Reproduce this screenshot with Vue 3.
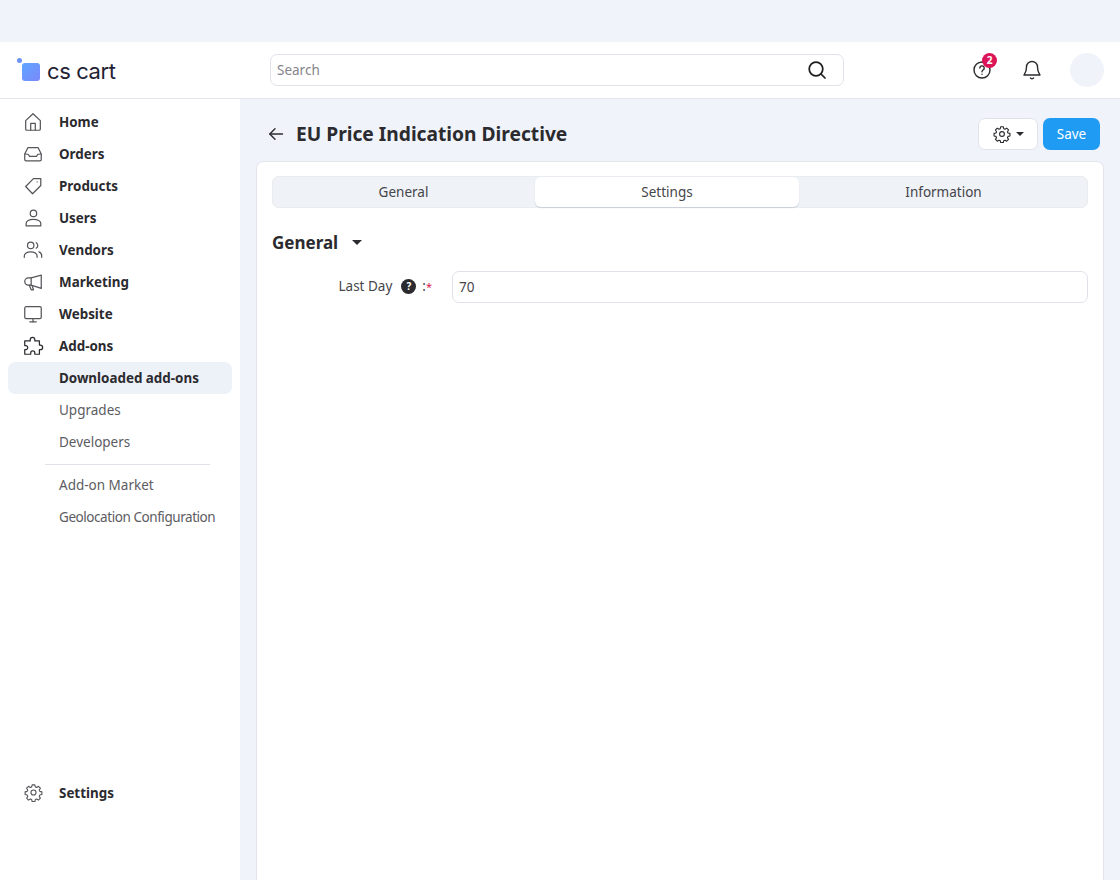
<script setup>
const nav = [
  { label: 'Home', paths: ['M4 10.500 12 3l8 7.500V19.500a1.500 1.500 0 0 1-1.500 1.500h-13A1.500 1.500 0 0 1 4 19.500z', 'M9.500 21v-7.500h5V21'] },
  { label: 'Orders', paths: ['M6.500 5h11L21 12v6a1.500 1.500 0 0 1-1.500 1.500h-15A1.500 1.500 0 0 1 3 18v-6z', 'M3 12c3.500 0 4 0 5 2.500h8c1-2.500 1.500-2.500 5-2.500'] },
  { label: 'Products', paths: ['M12.500 4H20.500v7.500L11.500 20.500 4 12.500z', 'M16.500 7.500h.01'] },
  { label: 'Users', paths: ['M12.500 3.500a3.500 3.500 0 1 1 0 7 3.500 3.500 0 0 1 0-7z', 'M4.500 20.500v-2.500c0-2.500 3.500-4.500 8-4.500s8 2 8 4.500v2.500z'] },
  { label: 'Vendors', paths: ['M9.500 3.500a3.500 3.500 0 1 1 0 7 3.500 3.500 0 0 1 0-7z', 'M2.500 20V19c0-3 3-5 7-5s7 2 7 5v1', 'M15.500 4a3.500 3.500 0 0 1 0 6', 'M18.500 14c2 .8 3 2.300 3 4.500v1.500'] },
  { label: 'Marketing', paths: ['M21 4.500v14.500L10 15.500H7a4 4 0 0 1 0-8h3z', 'M10 7.500v8', 'M8 15.500 10 20.500H12.500L11 16'] },
  { label: 'Website', paths: ['M4.500 4h15A1.500 1.500 0 0 1 21 5.500v10a1.500 1.500 0 0 1-1.500 1.500h-15A1.500 1.500 0 0 1 3 15.500v-10A1.500 1.500 0 0 1 4.500 4z', 'M12 17v3.500', 'M8.500 20.500h7'] },
  { label: 'Add-ons', dark: true, paths: ['M9 6.500V5a2.500 2.500 0 0 1 5 0v1.500h5V11h1a2.500 2.500 0 0 1 0 5h-1v5h-5v-1.500a2.200 2.200 0 0 0-4.500 0V21H3v-5h1.500a2.300 2.300 0 0 0 0-4.500H3V6.500z'] },
]
const sub = ['Upgrades', 'Developers']
const gear = 'M10.300 2.300h3.400l.6 2.600 1.700.7 2.300-1.400 2.400 2.400-1.400 2.300.7 1.700 2.600.6v3.400l-2.600.6-.7 1.700 1.400 2.300-2.400 2.400-2.300-1.400-1.700.7-.6 2.600h-3.400l-.6-2.600-1.700-.7-2.300 1.400-2.400-2.400 1.400-2.300-.7-1.700-2.600-.6v-3.400l2.600-.6.700-1.700-1.400-2.300 2.400-2.400 2.300 1.400 1.700-.7z'
</script>

<template>
  <div class="page">
    <div class="strip"></div>
    <header class="topbar">
      <div class="logo">
        <span class="logo-dot"></span>
        <span class="logo-square"></span>
        <span class="logo-text">cs cart</span>
      </div>
      <div class="search">
        <span class="search-ph">Search</span>
        <svg class="search-icon" width="20" height="20" viewBox="0 0 20 20" fill="none" stroke="#1c1c1e" stroke-width="1.700" stroke-linecap="round">
          <circle cx="9" cy="9" r="6.800" />
          <path d="m14 14 4 4" />
        </svg>
      </div>
      <div class="top-icons">
        <div class="help">
          <svg width="20" height="20" viewBox="0 0 20 20" fill="none" stroke="#2b2b2f" stroke-width="1.400" stroke-linecap="round">
            <circle cx="10" cy="10" r="8" />
            <path d="M7.800 8a2.200 2.200 0 1 1 3.300 2c-.8.500-1.100.9-1.100 1.700" />
            <path d="M10 14.300h.01" />
          </svg>
          <span class="badge">2</span>
        </div>
        <svg class="bell" width="20" height="22" viewBox="0 0 20 22" fill="none" stroke="#2b2b2f" stroke-width="1.400" stroke-linecap="round" stroke-linejoin="round">
          <path d="M10 2.500a5.500 5.500 0 0 0-5.500 5.500c0 5-2 7-2.500 8h16c-.5-1-2.500-3-2.500-8A5.500 5.500 0 0 0 10 2.500z" />
          <path d="M8.500 19c.5 1 2.500 1 3 0" />
        </svg>
        <span class="avatar"></span>
      </div>
    </header>
    <div class="body">
      <aside class="sidebar">
        <nav class="nav">
          <a v-for="item in nav" :key="item.label" class="nav-item">
            <svg class="nav-icon" width="22" height="22" viewBox="0 0 24 24" fill="none" :stroke="item.dark ? '#2b2b2f' : '#55555a'" stroke-width="1.350" stroke-linecap="round" stroke-linejoin="round">
              <path v-for="d in item.paths" :key="d" :d="d" />
            </svg>
            <span>{{ item.label }}</span>
          </a>
          <a class="sub-item active">Downloaded add-ons</a>
          <a v-for="s in sub" :key="s" class="sub-item">{{ s }}</a>
          <div class="divider"></div>
          <a class="sub-item">Add-on Market</a>
          <a class="sub-item tight">Geolocation Configuration</a>
        </nav>
        <a class="nav-item settings">
          <span class="gear-wrap">
            <svg width="19" height="19" viewBox="0 0 24 24" fill="none" stroke="#55555a" stroke-width="1.400" stroke-linejoin="round">
              <path :d="gear" />
              <circle cx="12" cy="12" r="3.200" />
            </svg>
          </span>
          <span>Settings</span>
        </a>
      </aside>
      <main class="main">
        <div class="title-row">
          <svg class="back" width="16" height="16" viewBox="0 0 16 16" fill="none" stroke="#2b2b2f" stroke-width="1.400" stroke-linecap="round" stroke-linejoin="round">
            <path d="M14.500 8H1.800" />
            <path d="M7 2.800 1.800 8 7 13.200" />
          </svg>
          <h1>EU Price Indication Directive</h1>
          <div class="actions">
            <button class="gear-btn">
              <svg width="18" height="18" viewBox="0 0 24 24" fill="none" stroke="#2b2b2f" stroke-width="1.500" stroke-linejoin="round">
                <path :d="gear" />
                <circle cx="12" cy="12" r="3.200" />
              </svg>
              <span class="caret small"></span>
            </button>
            <button class="save">Save</button>
          </div>
        </div>
        <section class="card">
          <div class="tabs">
            <div class="tab t1">General</div>
            <div class="tab t2 on">Settings</div>
            <div class="tab t3">Information</div>
          </div>
          <div class="section-head">
            <h2>General</h2>
            <span class="caret"></span>
          </div>
          <div class="field">
            <label class="field-label">
              <span>Last Day</span>
              <span class="q">?</span>
              <span class="colon">:</span><span class="req">*</span>
            </label>
            <div class="input">70</div>
          </div>
        </section>
      </main>
    </div>
  </div>
</template>

<style>
html, body { margin: 0; background: #f0f3fa; overflow: hidden; }
</style>

<style scoped>
.page {
  width: 1120px;
  height: 880px;
  overflow: hidden;
  background: #f0f3fa;
  font-family: "Noto Sans", "Open Sans", sans-serif;
  color: #2b2b2f;
  font-size: 14px;
  display: flex;
  flex-direction: column;
}
.strip { height: 42px; flex: none; }
.topbar {
  height: 56px;
  flex: none;
  background: #fff;
  border-bottom: 1px solid #e2e5ec;
  display: flex;
  align-items: center;
  box-sizing: content-box;
}
.logo { width: 270px; flex: none; position: relative; height: 56px; display: flex; align-items: center; padding-left: 22px; box-sizing: border-box; }
.logo-dot { position: absolute; left: 17px; top: 16px; width: 5px; height: 5px; border-radius: 50%; background: #6d93f5; }
.logo-square { width: 18px; height: 18px; border-radius: 3px; background: linear-gradient(135deg, #5fa6ff, #7c88fb); margin-top: 3px; }
.logo-text { margin-left: 7px; font-family: "Inter", sans-serif; font-size: 22px; font-weight: 400; letter-spacing: -0.4px; color: #1f2233; line-height: 1; margin-top: 2px; }
.search {
  width: 574px;
  height: 32px;
  box-sizing: border-box;
  border: 1px solid #dfe2e8;
  border-radius: 7px;
  display: flex;
  align-items: center;
  justify-content: space-between;
  padding: 0 16px 0 6px;
}
.search-ph { color: #85858b; font-size: 13.500px; }
.search-icon { display: block; }
.top-icons { flex: 1; display: flex; align-items: center; padding-left: 128px; }
.help { position: relative; width: 20px; height: 20px; }
.help svg { display: block; }
.badge {
  position: absolute;
  left: 10px;
  top: -7px;
  width: 15px;
  height: 15px;
  border-radius: 50%;
  background: #dc1558;
  color: #fff;
  font-size: 10px;
  font-weight: 700;
  line-height: 15px;
  text-align: center;
}
.bell { margin-left: 30px; display: block; }
.avatar { width: 34px; height: 34px; border-radius: 50%; background: #f0f3fa; margin-left: 28px; }
.body { flex: 1; display: flex; min-height: 0; }
.sidebar {
  width: 240px;
  flex: none;
  background: #fff;
  box-sizing: border-box;
  padding: 7px 8px 0;
  display: flex;
  flex-direction: column;
}
.nav { display: flex; flex-direction: column; }
.nav-item {
  height: 32px;
  display: flex;
  align-items: center;
  padding-left: 14px;
  font-weight: 700;
  font-size: 13.400px;
  color: #2b2b2f;
}
.nav-icon { margin-right: 15px; flex: none; }
.gear-wrap { width: 22px; height: 22px; margin: -2px 15px 0 0; display: flex; align-items: center; justify-content: center; flex: none; }
.sub-item {
  height: 32px;
  line-height: 32px;
  padding-left: 51px;
  color: #5c5c62;
  font-size: 13.500px;
  border-radius: 7px;
  white-space: nowrap;
}
.sub-item.tight { letter-spacing: -0.44px; }
.sub-item.active { background: #edf1f8; color: #2b2b2f; font-weight: 700; font-size: 13.400px; }
.divider { height: 1px; background: #dfe2e8; margin: 6px 22px 4px 37px; }
.settings { margin-top: 244px; }
.main { flex: 1; min-width: 0; padding: 0 16px; display: flex; flex-direction: column; }
.title-row { height: 62px; flex: none; display: flex; align-items: center; padding-left: 12px; padding-top: 7px; box-sizing: border-box; }
.back { flex: none; margin-right: 12px; }
h1 { margin: 0; font-size: 19.200px; font-weight: 700; color: #2b2b2f; line-height: 1; }
.actions { margin-left: auto; display: flex; gap: 5px; margin-right: 4px; }
.gear-btn {
  width: 60px;
  height: 32px;
  background: #fff;
  border: 1px solid #dfe2e8;
  border-radius: 7px;
  padding: 0;
  display: flex;
  align-items: center;
  justify-content: center;
  gap: 5px;
}
.save {
  width: 57px;
  height: 32px;
  border: none;
  border-radius: 7px;
  background: #1f9bf3;
  color: #fff;
  font: 13.500px "Noto Sans", sans-serif;
  padding: 0;
}
.card {
  flex: 1;
  background: #fff;
  border: 1px solid #e2e5ec;
  border-bottom: none;
  border-radius: 7px 7px 0 0;
  padding: 14px 15px 0;
}
.tabs {
  height: 32px;
  background: #eff2f6;
  border-radius: 7px;
  display: flex;
  box-shadow: inset 0 0 0 1px #e9ecf1;
}
.tab { display: flex; align-items: center; justify-content: center; color: #45454a; font-size: 13.500px; box-sizing: border-box; }
.t1 { width: 263px; }
.t2 { width: 264px; margin-top: 1px; height: 30px; }
.t3 { flex: 1; }
.tab.on { background: #fff; border-radius: 6px; box-shadow: 0 1px 1px #c9ced8; }
.section-head { display: flex; align-items: center; margin-top: 21px; height: 26px; }
h2 { margin: 0; font-size: 17px; font-weight: 700; color: #2b2b2f; line-height: 1; }
.caret { width: 0; height: 0; border-style: solid; border-width: 5px 5px 0; border-color: #2b2b2f transparent transparent; margin-left: 14px; }
.caret.small { border-width: 4px 4px 0; margin-left: 0; }
.field { display: flex; align-items: center; margin-top: 16px; height: 32px; }
.field-label { width: 161px; flex: none; display: flex; align-items: center; justify-content: flex-end; color: #45454a; font-size: 13.500px; padding: 0 1px 2px 0; box-sizing: border-box; }
.q {
  width: 15px;
  height: 15px;
  border-radius: 50%;
  background: #2b2b2f;
  color: #fff;
  font-size: 10px;
  font-weight: 700;
  line-height: 15px;
  text-align: center;
  margin: 0 6px 0 9px;
}
.req { color: #d6224f; font-size: 11px; }
.input {
  margin-left: 19px;
  flex: 1;
  height: 32px;
  box-sizing: border-box;
  border: 1px solid #dfe2e8;
  border-radius: 7px;
  padding-left: 6px;
  line-height: 30px;
  color: #45454a;
  font-size: 13.500px;
}
</style>
